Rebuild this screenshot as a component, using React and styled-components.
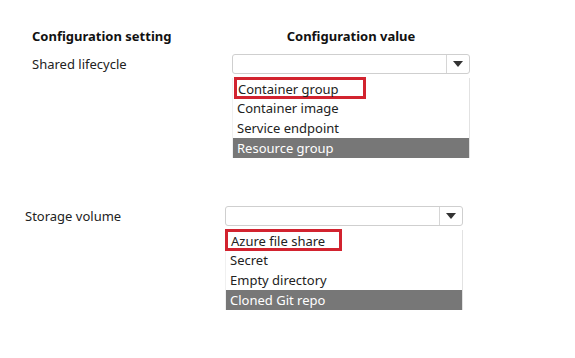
import React from 'react';
import styled, { createGlobalStyle } from 'styled-components';

const Global = createGlobalStyle`
  body {
    margin: 0;
    background: #fff;
    font-family: "Noto Sans", "Open Sans", sans-serif;
    color: #222;
  }
`;

const Page = styled.div`
  width: 575px;
  height: 358px;
  padding-top: 27px;
  box-sizing: border-box;
`;

const HeaderRow = styled.div`
  display: grid;
  grid-template-columns: 200px 238px;
  padding-left: 32px;
  font-size: 13px;
  font-weight: 700;
  line-height: 18px;
  color: #111;
`;

const HeadCell = styled.div`
  text-align: ${props => (props.center ? 'center' : 'left')};
`;

const Section = styled.div`
  display: grid;
  grid-template-columns: 200px 238px;
  padding-left: ${props => props.indent}px;
  margin-top: ${props => props.top}px;
`;

const Label = styled.div`
  font-size: 13px;
  height: 20px;
  line-height: 20px;
  color: #222;
`;

const Control = styled.div`
  display: flex;
  flex-direction: column;
`;

const Select = styled.div`
  display: flex;
  height: 20px;
  box-sizing: border-box;
  border: 1px solid #cfcfcf;
  border-radius: 3px;
  background: #fff;
`;

const SelectField = styled.div`
  flex: 1;
`;

const ArrowBox = styled.div`
  width: 22px;
  border-left: 1px solid #d6d6d6;
  display: flex;
  align-items: center;
  justify-content: center;
`;

const Arrow = styled.div`
  width: 0;
  height: 0;
  border-left: 5px solid transparent;
  border-right: 5px solid transparent;
  border-top: 6px solid #333;
`;

const List = styled.div`
  margin-top: 4px;
  border-right: 1px solid #e2e2e2;
  border-left: 1px solid #f0f0f0;
`;

const Item = styled.div`
  height: 20px;
  line-height: 20px;
  font-size: 13px;
  padding-left: 4px;
  color: ${props => (props.selected ? '#fff' : '#222')};
  background: ${props => (props.selected ? '#777' : 'transparent')};
`;

const Answer = styled.span`
  display: inline-block;
  box-sizing: border-box;
  width: ${props => props.w}px;
  height: 22px;
  line-height: 18px;
  margin: -1px 0 -1px ${props => props.shift}px;
  padding-left: ${props => -props.shift - 2}px;
  border: 3px solid #d2232f;
  vertical-align: top;
`;

const rows = [
  {
    label: 'Shared lifecycle',
    indent: 32,
    top: 9,
    answer: { w: 132, shift: -3 },
    options: ['Container group', 'Container image', 'Service endpoint', 'Resource group'],
  },
  {
    label: 'Storage volume',
    indent: 25,
    top: 48,
    answer: { w: 117, shift: -5 },
    options: ['Azure file share', 'Secret', 'Empty directory', 'Cloned Git repo'],
  },
];

export default function App() {
  return (
    <Page>
      <Global />
      <HeaderRow>
        <HeadCell>Configuration setting</HeadCell>
        <HeadCell center>Configuration value</HeadCell>
      </HeaderRow>
      {rows.map(row => (
        <Section key={row.label} indent={row.indent} top={row.top}>
          <Label>{row.label}</Label>
          <Control>
            <Select>
              <SelectField />
              <ArrowBox>
                <Arrow />
              </ArrowBox>
            </Select>
            <List>
              {row.options.map((opt, i) => (
                <Item key={opt} selected={i === row.options.length - 1}>
                  {i === 0 ? (
                    <Answer w={row.answer.w} shift={row.answer.shift}>
                      {opt}
                    </Answer>
                  ) : (
                    opt
                  )}
                </Item>
              ))}
            </List>
          </Control>
        </Section>
      ))}
    </Page>
  );
}
